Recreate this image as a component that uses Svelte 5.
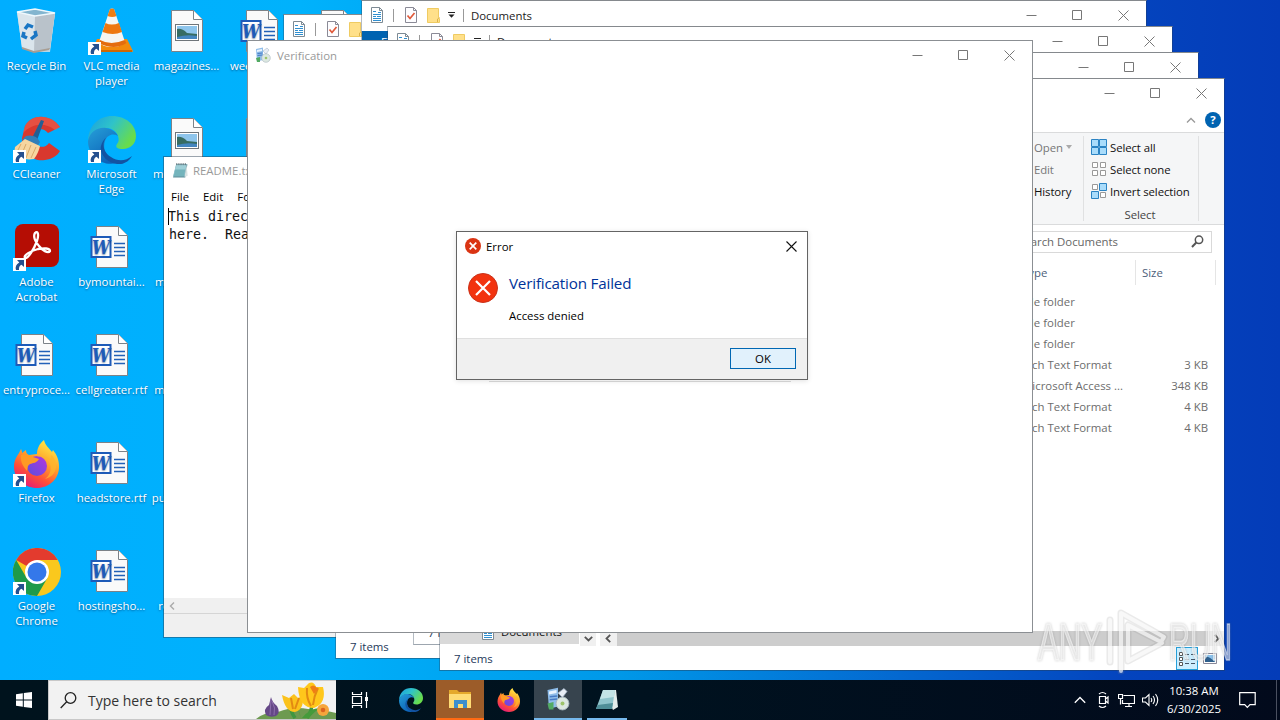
<script>
    const shortcuts = [
        { icon: "bin", label: "Recycle Bin" },
        { icon: "ccleaner", label: "CCleaner", link: true },
        { icon: "acrobat", label: "Adobe Acrobat", link: true },
        { icon: "word", label: "entryproce..." },
        { icon: "firefox", label: "Firefox", link: true },
        { icon: "chrome", label: "Google Chrome", link: true },
        { icon: "vlc", label: "VLC media player", link: true },
        { icon: "edge", label: "Microsoft Edge", link: true },
        { icon: "word", label: "bymountai..." },
        { icon: "word", label: "cellgreater.rtf" },
        { icon: "word", label: "headstore.rtf" },
        { icon: "word", label: "hostingsho..." },
        { icon: "image", label: "magazines..." },
        { icon: "image", label: "membersh..." },
        { icon: "image", label: "mailmusic..." },
        { icon: "image", label: "marketgro..." },
        { icon: "image", label: "publicnewa..." },
        { icon: "image", label: "rosslist.jpg" },
        { icon: "word", label: "weekhealt..." },
        { icon: "blank", label: "" },
        { icon: "blank", label: "" },
        { icon: "blank", label: "" },
        { icon: "blank", label: "" },
        { icon: "blank", label: "" },
        { icon: "blank", label: "" },
    ];

    // Stacked explorer windows, back to front
    const explorers = [
        { x: 283, y: 14 },
        { x: 309, y: 40 },
        { x: 335, y: 66 },
        { x: 361, y: 0 },
        { x: 387, y: 26 },
        { x: 413, y: 52 },
    ];

    const files = [
        { type: "File folder", size: "" },
        { type: "File folder", size: "" },
        { type: "File folder", size: "" },
        { type: "Rich Text Format", size: "3 KB" },
        { type: "Microsoft Access ...", size: "348 KB" },
        { type: "Rich Text Format", size: "4 KB" },
        { type: "Rich Text Format", size: "4 KB" },
    ];
</script>

{#snippet controls()}
    <svg class="controls" width="138" height="30" viewBox="0 0 138 30">
        <path
            d="M18.500 15.500h10M64.500 10.500h9v9h-9zM110.500 10.500l10 10M120.500 10.500l-10 10"
            fill="none"
            stroke="currentColor"
        />
    </svg>
{/snippet}

{#snippet edge(size)}
    <svg width={size} height={size} viewBox="0 0 48 48">
        <defs>
            <linearGradient id="e1" x1="0" y1="0" x2="1" y2=".5">
                <stop offset="0" stop-color="#1a9ee0" />
                <stop offset=".5" stop-color="#2fc3c9" />
                <stop offset="1" stop-color="#68dc4c" />
            </linearGradient>
            <linearGradient id="e2" x1="0" y1="0" x2=".6" y2="1">
                <stop offset="0" stop-color="#269fd8" />
                <stop offset="1" stop-color="#0c62b8" />
            </linearGradient>
        </defs>
        <path d="M0 24C1 9 11 0 24 0c14 0 24 9 24 20 0 8-6 13-13 13-6 0-8-2-6-5 2-2 2-5 1-8-3-8-12-10-20-6C5 16 2 20 0 24z" fill="url(#e1)" />
        <path d="M0 25C2 16 9 11 18 12c6 1 10 4 12 8-5-3-11-1-13 5-3 9 2 18 12 22-15 4-29-7-29-22z" fill="url(#e2)" />
        <path d="M18 22c-5 6-2 15 5 19 7 5 15 4 21-1-3 6-10 9-15 8-10-1-18-10-16-18 1-4 3-7 5-8z" fill="#1353a2" />
    </svg>
{/snippet}

{#snippet firefox(size)}
    <svg width={size} height={size} viewBox="0 0 48 48">
        <defs>
            <linearGradient id="f1" x1=".8" y1="0" x2=".25" y2="1">
                <stop offset="0" stop-color="#fff14a" />
                <stop offset=".4" stop-color="#ffa52b" />
                <stop offset=".7" stop-color="#ff5136" />
                <stop offset="1" stop-color="#e3157f" />
            </linearGradient>
            <linearGradient id="f2" x1="0" y1="1" x2="1" y2="0">
                <stop offset="0" stop-color="#5a4fe0" />
                <stop offset="1" stop-color="#b436dd" />
            </linearGradient>
        </defs>
        <path d="M8 9c1 2 1 3 1 4l4-3c0 3 1 4 3 5l8-1c0-5 2-10 7-14 1 5 5 8 8 12l1-2c4 5 6 10 6 17 0 12-10 21-22 21S1 39 1 27c0-7 3-11 5-14z" fill="url(#f1)" />
        <circle cx="24" cy="26" r="10" fill="url(#f2)" />
        <path d="M8 15c5-1 9 0 12 2l6 2c-2 4-6 4-9 5-3 2-2 4-3 7-3-4-7-8-6-16z" fill="#ff9a24" />
        <path d="M23 17c7-2 12 1 14 7 2 7-1 12-5 15 8-2 12-8 11-16-1-4-3-7-5-8 0 2 0 3-1 4-4-3-10-4-14-2z" fill="#ffb52c" opacity=".75" />
    </svg>
{/snippet}

{#snippet notepad(size)}
    <svg width={size} height={size} viewBox="0 0 16 16">
        <path d="M4 2h10.500l-2 12.500H1z" fill="#5d8f9b" />
        <path d="M3.800 2.500h9.800L11.800 13.500H1z" fill="#9fd0d8" />
        <path d="M3 7h9.500l-1 6.500H1.500z" fill="#5ea4ad" opacity=".65" />
        <path d="M13.600 2.500l1.200 10.500-3 1z" fill="#d8e2e2" />
        <path d="M4.500 1v2M6.500 1v2M8.500 1v2M10.500 1v2M12.500 1v2" stroke="#53646b" stroke-width=".8" />
    </svg>
{/snippet}

<!-- taskbar size of the notepad icon has no visible binding -->
{#snippet notepadLarge()}
    <svg width="24" height="24" viewBox="0 0 24 24">
        <path d="M8 2h13l2 17-5 3z" fill="#e3eceb" />
        <path d="M8 2h12l-3 19H1z" fill="#8fc4cc" />
        <path d="M8 2h12l-1 7L5 11z" fill="#c3e3e6" />
        <path d="M2.500 17L18 15l-1 6H1z" fill="#4f8e98" />
    </svg>
{/snippet}

{#snippet installer(size)}
    <svg width={size} height={size} viewBox="0 0 16 16">
        <path d="M1 2l7-1.500V13l-6 1.500z" fill="#8fbde9" />
        <path d="M2 3l5-1v2L2 5z" fill="#e9f4ff" />
        <path d="M2.500 6.500l5-.5M2.500 8.500l5-.5" stroke="#477bc5" />
        <path d="M8 4l4-3 2 2-3 4z" fill="#e8edf4" stroke="#9caec2" stroke-width=".5" />
        <path d="M1 11l4-1v5H2z" fill="#52aa62" />
        <circle cx="11" cy="11" r="4.300" fill="#dce8e1" stroke="#a7b6bd" stroke-width=".6" />
        <circle cx="11" cy="11" r="1.300" fill="#9dc46b" />
    </svg>
{/snippet}

{#snippet folderDoc()}
    <svg width="14" height="16" viewBox="0 0 14 16">
        <path d="M1.500.500h8l3 3v12h-11z" fill="#fff" stroke="#7d8a94" />
        <path d="M9.500.500v3h3" fill="none" stroke="#7d8a94" />
        <path d="M3 4.500h3M8 5.500h3M3 7.500h8M3 9.500h3M7 9.500h4M3 11.500h8M3 13.500h8" stroke="#2f8fd0" />
    </svg>
{/snippet}

{#snippet quickBar()}
    <div class="quick">
        {@render folderDoc()}
        <i class="bar"></i>
        <svg width="14" height="16" viewBox="0 0 14 16">
            <path d="M1.500.500h8l3 3v12h-11z" fill="#fdfdff" stroke="#8a8a96" />
            <path d="M9.500.500v3h3" fill="none" stroke="#8a8a96" />
            <path d="M3.500 8.500l2.500 3 4.500-5.500" fill="none" stroke="#e0593a" stroke-width="1.700" />
        </svg>
        <svg class="fold" width="13" height="15" viewBox="0 0 13 15">
            <path d="M0.500.500h11v9l1 1v4h-12z" fill="#ffe08a" stroke="#efcb62" />
            <path d="M10.500 14v-3l2-1.500" stroke="#dcb24b" fill="none" />
        </svg>
        <svg class="drop" width="7" height="6" viewBox="0 0 7 6">
            <path d="M0 .500h7" stroke="#222" />
            <path d="M.5 2.500h6L3.500 5.800z" fill="#222" />
        </svg>
        <i class="bar"></i>
        <span>Documents</span>
    </div>
{/snippet}

{#snippet desktopIcon(name)}
    {#if name === "edge"}
        {@render edge(48)}
    {:else if name === "firefox"}
        {@render firefox(48)}
    {:else}
        <svg width="48" height="48" viewBox="0 0 48 48">
            {#if name === "bin"}
                <path d="M4 4l18-3 20 4-5 39-16 0-12-4z" fill="#c9dbe6" opacity=".9" />
                <path d="M4 4l18 4 20-3-5 36-16 3-12-4z" fill="#dae5ec" />
                <path d="M22 8l20-3-5 36-16 3z" fill="#b9c2ca" />
                <path d="M4 4l18-3 20 4-20 3z" fill="#83b5cf" stroke="#eef8fd" stroke-width="1.500" />
                <path d="M9 39l12 4 16-3-1 2-15 3-12-4z" fill="#a89d92" />
                <g fill="none" stroke="#1976c4" stroke-width="3.500">
                    <path d="M12 21l3-4 5 2" />
                    <path d="M22 23l1 4-5 4" />
                    <path d="M14 30l-4-2 1-4" />
                </g>
            {:else if name === "vlc"}
                <path d="M9 31h30l6 12q0 1-1 1H5q-1 0-1-1z" fill="#f28a0c" />
                <path d="M4 42h40v2H5z" fill="#cc6704" />
                <path d="M22 1q2-1 4 0l11 33q-3 5-13 5T11 34z" fill="#f5f5f2" />
                <path d="M22 1q2-1 4 0l2.500 7q-4 2-9 0z" fill="#ef7d12" />
                <path d="M17.500 15q6 3 13.500 0l3 9q-9 4-19.500 0z" fill="#ed7710" />
                <path d="M12 32q11 6 24.500 0l2 3q-12 8-28 0z" fill="#e46c0e" />
            {:else if name === "ccleaner"}
                <path d="M47 11C38-2 19-3 12 10l-3 12c0 16 12 24 23 22 7-1 12-4 15-9l-11-8c-5 7-15 4-15-5 0-9 9-12 14-5z" fill="#d8382e" />
                <path d="M47 11C38-2 19-3 12 10l-2 7c8-8 20-12 32-3z" fill="#ee6150" opacity=".6" />
                <path d="M28 4l3 1-8 22-5-3z" fill="#225f94" />
                <path d="M13 20q10-2 14 6l-3 5-15-7z" fill="#327fb8" />
                <path d="M12 23l15 7q-2 8-6 13-11 2-20-5l1-7z" fill="#f6d6a0" />
                <path d="M8 28l-4 8M13 28l-5 12M18 29l-5 13M23 31l-5 11" stroke="#d9a968" fill="none" />
            {:else if name === "acrobat"}
                <rect x="2" y="0" width="44" height="43" rx="8" fill="#b50d04" />
                <path
                    d="M22 9c3-3 4 2 2 8-3 8-9 18-12 17-2-3 6-7 13-9 6-1 12-1 12 2-2 3-8-1-11-5-4-4-6-10-4-13z"
                    fill="none"
                    stroke="#fff"
                    stroke-width="2.300"
                />
            {:else if name === "chrome"}
                <circle cx="24" cy="24" r="24" fill="#fac81d" />
                <path d="M24 24L3.200 12A24 24 0 0 1 44.800 12H24z" fill="#e33b2e" />
                <path d="M3.200 12A24 24 0 0 0 24 48L34.400 30 24 36 13.600 30z" fill="#1e9a4a" />
                <circle cx="24" cy="24" r="12" fill="#fff" />
                <circle cx="24" cy="24" r="9.500" fill="#3478ea" />
            {:else}
                <path d="M8.500 2.500h22l9 9v32h-31z" fill="#fafafa" stroke="#7c8288" />
                <path d="M30.500 2.500v9h9" fill="#fff" stroke="#7c8288" />
                {#if name === "word"}
                    <path d="M26 19.500h11M26 23.500h11M26 27.500h11M26 31.500h11" stroke="#2361b8" stroke-width="1.300" />
                    <rect x="3.500" y="13" width="19" height="20" fill="#fff" stroke="#1e5bb8" stroke-width="2" />
                    <text x="13" y="29.500" class="w" text-anchor="middle" textLength="18" lengthAdjust="spacingAndGlyphs">W</text>
                {:else if name === "image"}
                    <rect x="12.500" y="16.500" width="23" height="16" fill="#fff" stroke="#6f757a" />
                    <path d="M14 18h20v13H14z" fill="#8ec5ec" />
                    <path d="M14 21q5-1 10 4l10 1v4H14z" fill="#376c62" />
                    <path d="M14 29q10-3 20-1v3H14z" fill="#4486c0" />
                {/if}
            {/if}
        </svg>
    {/if}
{/snippet}

<div class="desktop">
    <div class="icons">
        {#each shortcuts as item}
            <div class="item">
                <div class="pic">
                    {@render desktopIcon(item.icon)}
                    {#if item.link}
                        <svg class="arrow" width="13" height="13" viewBox="0 0 13 13">
                            <rect width="13" height="13" fill="#fff" />
                            <path d="M4 2h7v7L8.500 6.700Q5.500 8 6 12H3Q1.500 7 6.300 4.400z" fill="#25508f" />
                        </svg>
                    {/if}
                </div>
                <span>{item.label}</span>
            </div>
        {/each}
    </div>

    <section class="window readme">
        <header>{@render notepad(17)}<span>README.txt - Notepad</span></header>
        <nav><span>File</span><span>Edit</span><span>Format</span></nav>
        <div class="page">This directory is monitored
here.  Read and write</div>
        <div class="hscroll">
            <svg width="6" height="8" viewBox="0 0 6 8"><path d="M5 .500L1.500 4 5 7.500" fill="none" stroke="#aaa" stroke-width="1.400" /></svg>
        </div>
        <footer></footer>
    </section>

    {#each explorers as win}
        <section class="window explorer" style="left: {win.x}px; top: {win.y}px">
            <header>
                {@render quickBar()}
                {@render controls()}
            </header>
            <div class="file-tab">File</div>
            <div class="grow"></div>
            <footer class="status">
                <span>7 items</span>
            </footer>
        </section>
    {/each}

    <section class="window explorer front">
        <header>
            <span></span>
            {@render controls()}
        </header>
        <div class="tabs">
            <svg width="10" height="6" viewBox="0 0 10 6"><path d="M1 5.500L5 1.500 9 5.500" fill="none" stroke="#999" stroke-width="1.300" /></svg>
            <b class="help">?</b>
        </div>
        <div class="ribbon">
            <div class="group open">
                <p class="dim">Open <i></i></p>
                <p class="dim">Edit</p>
                <p>History</p>
            </div>
            <div class="group select">
                <p>
                    <svg width="16" height="16" viewBox="0 0 16 16"><path d="M.500.500h7v7h-7zM8.500.500h7v7h-7zM.500 8.500h7v7h-7zM8.500 8.500h7v7h-7z" fill="#a9dcfb" stroke="#2b83c3" /></svg>
                    Select all
                </p>
                <p>
                    <svg width="16" height="16" viewBox="0 0 16 16"><path d="M1.500 1.500h5v5h-5zM9.500 1.500h5v5h-5zM1.500 9.500h5v5h-5zM9.500 9.500h5v5h-5z" fill="#fff" stroke="#999" /></svg>
                    Select none
                </p>
                <p>
                    <svg width="16" height="16" viewBox="0 0 16 16">
                        <path d="M1.500 1.500h5v5h-5zM9.500 9.500h5v5h-5z" fill="#fff" stroke="#999" />
                        <path d="M8.500.500h7v7h-7zM.500 8.500h7v7h-7z" fill="#a9dcfb" stroke="#2b83c3" />
                    </svg>
                    Invert selection
                </p>
                <small>Select</small>
            </div>
        </div>
        <div class="address">
            <div class="search-box">
                <span>Search Documents</span>
                <svg width="13" height="13" viewBox="0 0 13 13"><circle cx="8" cy="4.800" r="3.700" fill="none" stroke="#555" stroke-width="1.500" /><path d="M5.300 7.500L1 12" stroke="#555" stroke-width="2" /></svg>
            </div>
        </div>
        <div class="body">
            <div class="tree">
                <div class="node">{@render folderDoc()}<span>Documents</span></div>
                <div class="down">
                    <svg width="9" height="6" viewBox="0 0 9 6"><path d="M.800.800L4.500 4.500 8.200.800" fill="none" stroke="#555" stroke-width="1.800" /></svg>
                </div>
            </div>
            <div class="list">
                <div class="row head"><span class="type">Type</span><span class="size">Size</span></div>
                {#each files as file}
                    <div class="row"><span class="type">{file.type}</span><span class="size">{file.size}</span></div>
                {/each}
                <div class="grow"></div>
                <div class="track">
                    <svg width="6" height="9" viewBox="0 0 6 9"><path d="M5.200.800L1.500 4.500 5.200 8.200" fill="none" stroke="#555" stroke-width="1.800" /></svg>
                    <i></i>
                    <svg width="6" height="9" viewBox="0 0 6 9"><path d="M.800.800L4.500 4.500.800 8.200" fill="none" stroke="#555" stroke-width="1.800" /></svg>
                </div>
            </div>
        </div>
        <footer class="status">
            <span>7 items</span>
            <div class="views">
                <div class="on">
                    <svg width="17" height="14" viewBox="0 0 17 14"><path d="M.500.500h3v3h-3zM.500 5.500h3v3h-3zM.500 10.500h3v3h-3z" fill="#fff" stroke="#555" /><path d="M6 2.500h4M6 7.500h4M6 11.500h4M12 2.500h4M12 7.500h4M12 11.500h4" stroke="#456" /></svg>
                </div>
                <svg width="14" height="11" viewBox="0 0 14 11"><path d="M.500.500h13v10H.500z" fill="#fff" stroke="#889" /><path d="M2 2h10v7H2z" fill="#8cc4ef" /><path d="M2 4q4-1 10 5H2z" fill="#2e5f8d" /></svg>
            </div>
        </footer>
    </section>

    <section class="window verification">
        <header>
            <div class="title">{@render installer(16)}<span>Verification</span></div>
            {@render controls()}
        </header>
        <div class="progress"></div>
    </section>

    <section class="dialog">
        <header>
            <svg width="16" height="16" viewBox="0 0 16 16"><circle cx="8" cy="8" r="8" fill="#da3413" /><path d="M4.700 4.700l6.600 6.600M11.300 4.700l-6.600 6.600" stroke="#fff" stroke-width="1.700" /></svg>
            <span>Error</span>
            <svg width="11" height="11" viewBox="0 0 11 11"><path d="M.500.500l10 10M10.500.500l-10 10" stroke="#111" stroke-width="1.100" /></svg>
        </header>
        <div class="message">
            <svg width="30" height="30" viewBox="0 0 30 30"><circle cx="15" cy="15" r="14.500" fill="#f2330f" stroke="#c9321a" /><path d="M8 8l14 14M22 8L8 22" stroke="#fff" stroke-width="2.200" /></svg>
            <div>
                <h1>Verification Failed</h1>
                <p>Access denied</p>
            </div>
        </div>
        <footer><button>OK</button></footer>
    </section>

    <svg class="watermark" width="200" height="70" viewBox="0 0 200 70">
        <g fill="#fff" fill-opacity=".5" stroke="#fff" stroke-opacity=".5" stroke-width="1.500">
            <text x="4" y="53.500" textLength="64" lengthAdjust="spacingAndGlyphs">ANY</text>
            <text x="135" y="53.500" textLength="63" lengthAdjust="spacingAndGlyphs">RUN</text>
        </g>
        <g fill="none" stroke-linejoin="round" stroke-linecap="round">
            <path d="M76 56V14M87 65V7l43 24-3 5-33-17v36l34-18" stroke="#888" stroke-opacity=".18" stroke-width="7" />
            <path d="M76 56V14M87 65V7l43 24-3 5-33-17v36l34-18" stroke="#fff" stroke-opacity=".65" stroke-width="4" />
        </g>
    </svg>

    <div class="taskbar">
        <div class="start">
            <svg width="16" height="16" viewBox="0 0 16 16"><path d="M0 2.200L6.800 1.200v6.300H0zM7.800 1L16 0v7.500H7.800zM0 8.500h6.800v6.300L0 13.800zM7.800 8.500H16V16l-8.200-1z" fill="#fff" /></svg>
        </div>
        <div class="search">
            <svg width="17" height="17" viewBox="0 0 17 17"><circle cx="10.500" cy="6" r="5.300" fill="none" stroke="#222" stroke-width="1.300" /><path d="M6.700 9.800L.700 16" stroke="#222" stroke-width="1.300" /></svg>
            <span>Type here to search</span>
            <svg class="flowers" width="80" height="38" viewBox="0 0 80 38">
                <path d="M0 38q8-7 22-7 15-6 30-3 18 1 28 4v6z" fill="#6d9a50" />
                <path d="M34 22q0 8 5 15M56 22q0 8-5 15" stroke="#3f9640" stroke-width="3.500" fill="none" />
                <path d="M45 37Q42 26 40 23M46 37q8-10 18-10-5 3-11 10" fill="#459b3b" />
                <path d="M15 16q1 5 6 9 4 7-1 10-6 2-10-1-3-6 3-10z" fill="#654887" />
                <path d="M15 18l-1 16M16 20q4 7 2 14" stroke="#8d6eac" fill="none" />
                <path d="M26 14l7 3 5-4 4 4 5-2q1 14-8 16-10 0-13-17z" fill="#fbc21c" />
                <path d="M42 6l6 1 5-5q5-2 7 4l7 0q4 16-9 21-15 0-16-21z" fill="#ffc71b" />
                <path d="M51 7q-1 10 4 18M62 7q-4 8-5 17M35 17l2 11M43 17l-4 11" stroke="#e38a12" stroke-width="2" fill="none" />
                <path d="M54 6q4-4 8 2l-4 5z" fill="#ef7c16" />
                <circle cx="67" cy="29" r="6" fill="#f6a53c" />
                <circle cx="67" cy="29" r="2.300" fill="#dc641f" />
            </svg>
        </div>
        <div class="task">
            <svg width="18" height="16" viewBox="0 0 18 16"><path d="M1.500 0v2.500h9V0M1.500 4.500h9v7h-9zM1.500 16v-2.500h9V16M15.500 0v16" fill="none" stroke="#fff" stroke-width="1.200" /><path d="M14 5h3v4h-3z" fill="#fff" /></svg>
        </div>
        <div class="task wide">{@render edge(24)}</div>
        <div class="task files">
            <svg width="22" height="20" viewBox="0 0 22 20"><path d="M0 1h8l2 2h12v16H0z" fill="#e5a92b" /><path d="M0 5h22v14H0z" fill="#ffdc75" /><path d="M5 11h13v8h-4v-4H9v4H5z" fill="#3d8fcd" /></svg>
        </div>
        <div class="task">{@render firefox(24)}</div>
        <div class="task active">{@render installer(24)}</div>
        <div class="task running">{@render notepadLarge()}</div>
        <div class="tray">
            <svg width="12" height="8" viewBox="0 0 12 8"><path d="M.800 6.800L6 1.500l5.200 5.300" fill="none" stroke="#fff" stroke-width="1.300" /></svg>
            <svg width="14" height="18" viewBox="0 0 14 18"><path d="M3.500 5.500h6v7h-6zM9.500 8l2.500-2v6l-2.500-2M3 3Q6.500 0 10 3M3 15q3.500 3 7 0" fill="none" stroke="#fff" stroke-width="1.200" /></svg>
            <svg width="17" height="15" viewBox="0 0 17 15"><path d="M5.500 2.500h11v8H4.500V7M11 10.500v3M7 13.500h7M.500 1.500h4v4h-4zM2.500 5.500v6" fill="none" stroke="#fff" stroke-width="1.200" /></svg>
            <svg width="17" height="14" viewBox="0 0 17 14"><path d="M.500 5h3L7 1.500v11L3.500 9h-3zM9 5q1.500 2 0 4M11 3q3 4 0 8M13.500 1q4.500 6 0 12" fill="none" stroke="#fff" stroke-width="1.100" /></svg>
        </div>
        <div class="clock"><span>10:38 AM</span><span>6/30/2025</span></div>
        <div class="note">
            <svg width="17" height="17" viewBox="0 0 17 17"><path d="M.700.700h15.500v12H11l-2.700 2.800L5.700 12.700h-5z" fill="none" stroke="#fff" stroke-width="1.200" /></svg>
        </div>
    </div>
</div>

<style>
    :global(body) {
        margin: 0;
        overflow: hidden;
    }

    .desktop {
        position: relative;
        width: 1280px;
        height: 720px;
        overflow: hidden;
        background: linear-gradient(90deg, #00aeff 0, #00b2fc 300px, #0098e8 620px, #0468d0 900px, #0444be 1120px, #043cb8 1280px);
        font-family: "Open Sans", "Noto Sans", sans-serif;
        font-size: 11.4px;
        line-height: 15px;
        color: #111;
    }

    p,
    h1 {
        margin: 0;
        font-weight: normal;
    }

    svg {
        display: block;
        flex: none;
    }

    header,
    footer {
        box-sizing: border-box;
        flex: none;
        display: flex;
        align-items: center;
    }

    /* desktop shortcuts */
    .icons {
        display: grid;
        grid-auto-flow: column;
        grid-template-rows: repeat(6, 108px);
        grid-auto-columns: 75px;
        margin-left: -1px;
    }

    .item {
        display: flex;
        flex-direction: column;
        align-items: center;
        padding-top: 8px;
        gap: 2px;
        color: #fff;
        text-align: center;
        text-shadow: 0 1px 2px rgba(0, 40, 90, 0.6);
    }

    .item > span {
        max-width: 72px;
    }

    .pic {
        position: relative;
    }

    .arrow {
        position: absolute;
        left: 0;
        bottom: 1px;
    }

    .w {
        font: italic bold 18px "DejaVu Serif", serif;
        fill: #1e5bb8;
    }

    /* windows */
    .window {
        position: absolute;
        box-sizing: border-box;
        display: flex;
        flex-direction: column;
        background: #fff;
        border: 1px solid #8b8f93;
        overflow: hidden;
    }

    .window header {
        height: 30px;
        padding-bottom: 2px;
        justify-content: space-between;
    }

    .controls {
        color: #777;
    }

    .readme {
        left: 163px;
        top: 156px;
        width: 784px;
        height: 482px;
        background-clip: padding-box;
        border-color: rgba(40, 60, 80, 0.45);
    }

    .window.readme header {
        height: 29px;
        justify-content: flex-start;
        gap: 4px;
        padding-left: 8px;
        color: #999;
    }

    .readme nav {
        display: flex;
        height: 20px;
        margin-bottom: 2px;
        align-items: center;
        gap: 14px;
        padding-left: 7px;
        color: #000;
    }

    .page {
        flex: 1;
        margin-left: 4px;
        border-left: 1px solid #000;
        border-image: linear-gradient(#000 18px, transparent 18px) 1;
        font: 13.3px/18px "DejaVu Sans Mono", monospace;
        text-indent: -1px;
        white-space: pre;
    }

    .hscroll {
        height: 15px;
        display: flex;
        align-items: center;
        padding-left: 5px;
        background: #f0f0f0;
        border-bottom: 1px solid #d5d5d5;
    }

    .readme footer {
        height: 23px;
        background: #f0f0f0;
    }

    .explorer {
        width: 786px;
        height: 593px;
        background-clip: padding-box;
        border-color: #85898d rgba(40, 60, 80, 0.35) rgba(40, 60, 80, 0.45);
    }

    .quick {
        display: flex;
        align-items: center;
        padding-left: 8px;
        color: #222;
    }

    .bar {
        width: 1px;
        height: 13px;
        background: #999;
        margin: 0 10px 0 9px;
    }

    .fold {
        margin-left: 9px;
    }

    .drop {
        margin-left: 8px;
    }

    .drop + .bar {
        margin: 0 7px 0 8px;
    }

    .file-tab {
        width: 56px;
        height: 23px;
        background: #0063b1;
        color: #fff;
        text-align: center;
        line-height: 22px;
    }

    .grow {
        flex: 1;
    }

    .status {
        height: 24px;
        padding: 1px 5px 0 14px;
        justify-content: space-between;
        color: #1e395b;
    }

    /* front explorer window */
    .front {
        left: 439px;
        top: 78px;
    }

    .tabs {
        height: 23px;
        box-sizing: border-box;
        display: flex;
        align-items: center;
        justify-content: flex-end;
        gap: 9px;
        padding: 0 3px 1px 0;
    }

    .help {
        width: 16px;
        height: 16px;
        border-radius: 50%;
        background: #0063b1;
        color: #fff;
        text-align: center;
        line-height: 16px;
    }

    .ribbon {
        height: 91px;
        display: flex;
        justify-content: flex-end;
        padding-right: 25px;
        background: #f5f6f7;
        border: solid #dadbdc;
        border-width: 1px 0;
        letter-spacing: -0.1px;
    }

    .group {
        box-sizing: border-box;
        margin: 3px 0;
        border-right: 1px solid #e0e1e2;
    }

    .group p {
        display: flex;
        align-items: center;
        height: 22px;
        gap: 3px;
    }

    .group.open {
        width: 50px;
    }

    .group.select {
        width: 115px;
        padding-left: 7px;
    }

    .dim {
        color: #777;
    }

    .dim i {
        border: 3px solid transparent;
        border-top: 4px solid #aaa;
        border-bottom: 0;
    }

    .group small {
        display: block;
        padding-right: 9px;
        line-height: 25px;
        font-size: 11.4px;
        text-align: center;
        color: #444;
    }

    .address {
        height: 34px;
        display: flex;
        align-items: center;
        justify-content: flex-end;
        padding-right: 12px;
        color: #666;
    }

    .search-box {
        box-sizing: border-box;
        width: 201px;
        height: 22px;
        border: 1px solid #d9d9d9;
        display: flex;
        align-items: center;
        justify-content: space-between;
        padding: 0 7px 1px 6px;
    }

    .body {
        flex: 1;
        min-height: 0;
        display: flex;
    }

    .tree {
        width: 160px;
        display: flex;
        align-items: flex-end;
        gap: 1px;
    }

    .node {
        width: 139px;
        height: 24px;
        margin-bottom: 2px;
        box-sizing: border-box;
        display: flex;
        gap: 6px;
        padding: 4px 0 0 41px;
        background: #d9d9d9;
    }

    .down {
        width: 16px;
        height: 15px;
        display: grid;
        place-items: center;
        background: #f0f0f0;
    }

    .list {
        flex: 1;
        display: flex;
        flex-direction: column;
    }

    .row {
        display: flex;
        height: 21px;
        align-items: center;
        justify-content: flex-end;
        padding-right: 8px;
        color: #6d6d6d;
    }

    .row.head {
        height: 25px;
        margin: 1px 0 6px;
        color: #4c607a;
    }

    .type {
        width: 113px;
        letter-spacing: 0.03px;
    }

    .size {
        box-sizing: border-box;
        width: 81px;
        padding-right: 8px;
        text-align: right;
    }

    .head .size {
        padding-left: 6px;
        line-height: 25px;
        border: solid #e5e5e5;
        border-width: 0 1px;
        text-align: left;
    }

    .track {
        height: 15px;
        display: flex;
        align-items: center;
        gap: 6px;
        padding: 0 4px 0 5px;
        background: #f0f0f0;
    }

    .track i {
        flex: 1;
        height: 15px;
        background: #cdcdcd;
    }

    .views {
        display: flex;
        align-items: center;
        gap: 5px;
        padding-right: 2px;
    }

    .on {
        width: 20px;
        height: 21px;
        display: grid;
        place-items: center;
        background: #cceeff;
        border: 1px solid #26a0da;
    }

    /* verification window */
    .verification {
        left: 247px;
        top: 40px;
        width: 786px;
        height: 593px;
    }

    .title {
        display: flex;
        align-items: center;
        gap: 6px;
        padding-left: 7px;
        color: #999;
    }

    .progress {
        width: 302px;
        height: 310px;
        margin-left: 241px;
        border-bottom: 1px solid #dcdcdc;
    }

    /* error dialog */
    .dialog {
        position: absolute;
        left: 456px;
        top: 231px;
        width: 352px;
        height: 149px;
        box-sizing: border-box;
        display: flex;
        flex-direction: column;
        background: #fff;
        border: 1px solid #646464;
        color: #000;
        box-shadow: 0 1px 5px rgba(0, 0, 0, 0.12);
    }

    .dialog header {
        height: 30px;
        padding: 0 10px 2px 8px;
        gap: 5px;
    }

    .dialog header span {
        flex: 1;
    }

    .message {
        flex: 1;
        display: flex;
        gap: 11px;
        padding: 11px 11px 0;
    }

    .message h1 {
        font-size: 15.2px;
        letter-spacing: -0.18px;
        line-height: 20px;
        color: #003399;
    }

    .message p {
        margin-top: 15px;
    }

    .dialog footer {
        height: 41px;
        justify-content: flex-end;
        padding: 0 11px 2px 0;
        background: #f0f0f0;
        border-top: 1px solid #dfdfdf;
    }

    .dialog button {
        width: 66px;
        height: 21px;
        padding: 0;
        font: inherit;
        color: #000;
        background: #e1f1fc;
        border: 1px solid #0067b3;
    }

    .watermark {
        position: absolute;
        left: 1034px;
        top: 606px;
    }

    .watermark text {
        font: 52px "Liberation Sans", sans-serif;
        filter: drop-shadow(0 0 1px rgba(90, 90, 90, 0.5));
    }

    /* taskbar */
    .taskbar {
        position: absolute;
        left: 0;
        right: 0;
        bottom: 0;
        height: 40px;
        display: flex;
        background: linear-gradient(90deg, #00131d, #00121f 50%, #020a1c);
        color: #fff;
    }

    .start {
        width: 48px;
        display: grid;
        place-items: center;
    }

    .search {
        box-sizing: border-box;
        width: 288px;
        display: flex;
        align-items: center;
        padding-left: 11px;
        gap: 11px;
        background: #f2f2f2;
        border: 1px solid #c8c8c8;
        border-right: 0;
        color: #333;
        font-size: 14px;
    }

    .flowers {
        margin-left: auto;
    }

    .task {
        box-sizing: border-box;
        width: 48px;
        margin-right: 1px;
        display: grid;
        place-items: center;
    }

    .wide {
        margin-left: 2px;
    }

    .files {
        background: #9c5c29;
        border-bottom: 2px solid #ff6a13;
    }

    .active {
        background: #37444e;
        border-bottom: 2px solid #76b9ed;
    }

    .running {
        background: linear-gradient(#76b9ed, #76b9ed) center bottom / 40px 2px no-repeat;
    }

    .tray {
        margin-left: auto;
        display: flex;
        align-items: center;
        gap: 7.5px;
    }

    .tray svg:first-child {
        margin-right: 3px;
    }

    .clock {
        width: 70px;
        display: flex;
        flex-direction: column;
        justify-content: center;
        text-align: center;
        line-height: 18px;
    }

    .note {
        width: 48px;
        padding-right: 11px;
        display: grid;
        place-items: center;
        border-right: 1px solid #4a5060;
        margin-right: 3px;
        box-sizing: border-box;
    }
</style>
